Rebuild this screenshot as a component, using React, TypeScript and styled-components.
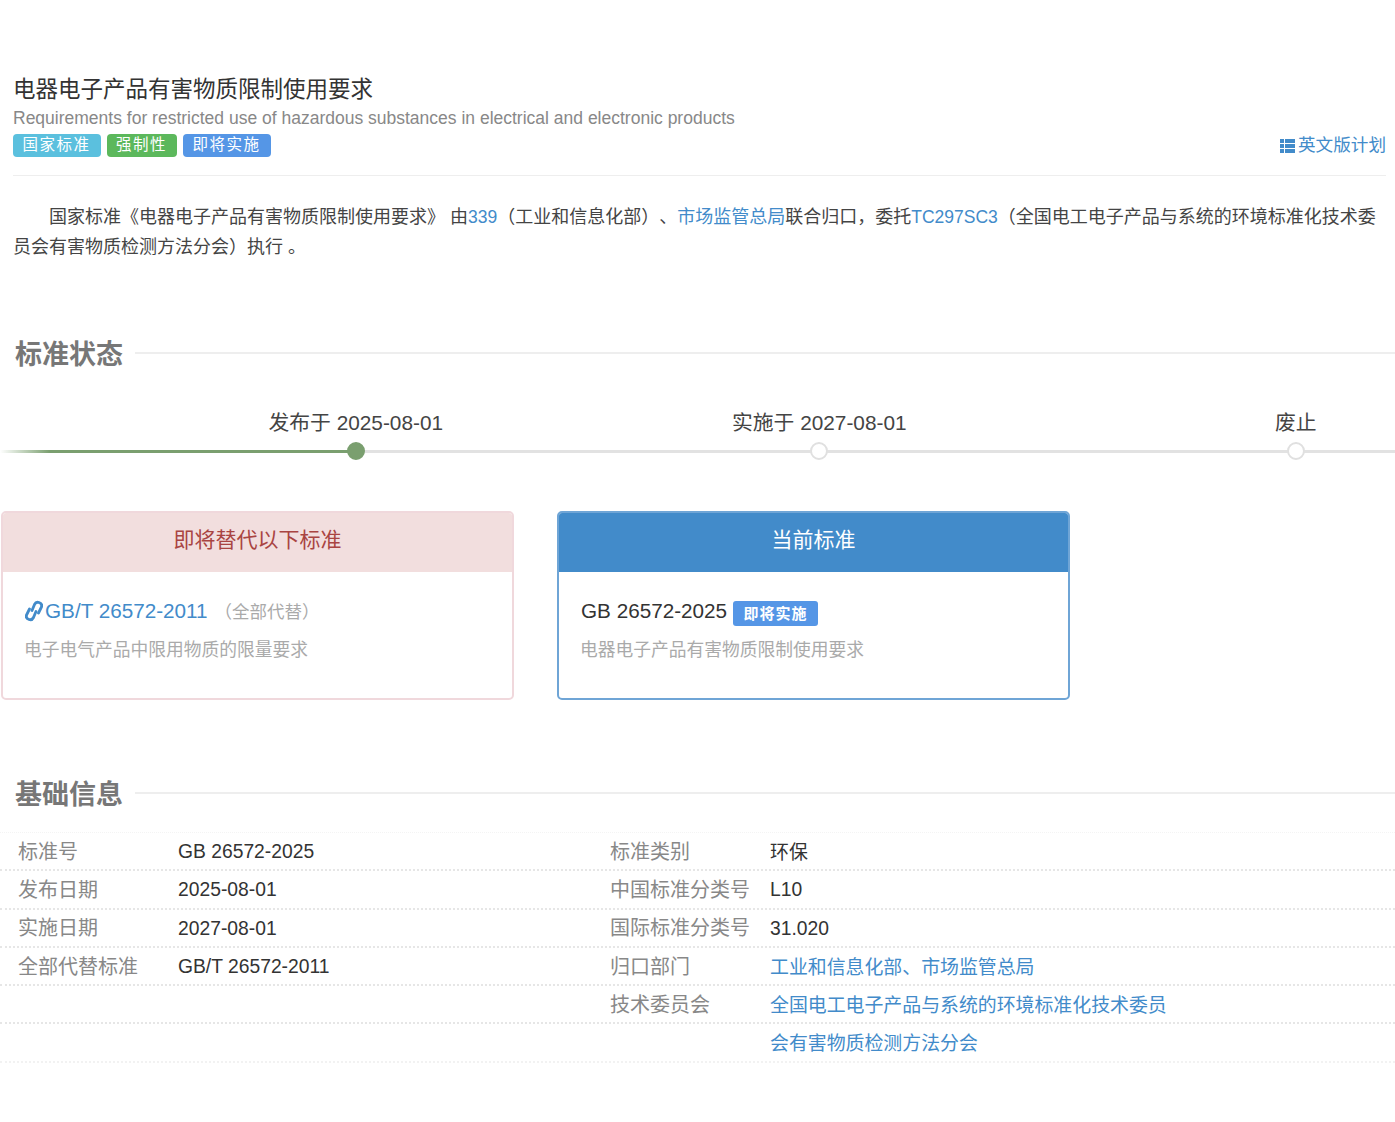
import React from "react";
import styled, { createGlobalStyle } from "styled-components";

const Global = createGlobalStyle`
  html, body { margin: 0; padding: 0; background: #fff; }
  body {
    font-family: "Liberation Sans", "Noto Sans CJK SC", sans-serif;
    color: #333;
    text-spacing-trim: space-all;
  }
  a { color: #428bca; text-decoration: none; }
`;

const Page = styled.div`
  width: 1395px;
  height: 1122px;
  overflow: hidden;
`;

const Header = styled.header`
  margin: 0 9px 0 13px;
  padding: 75px 0 18px;
  border-bottom: 1px solid #eee;
`;

const Title = styled.h1`
  margin: 0;
  font-size: 22.5px;
  line-height: 30px;
  font-weight: 400;
  color: #333;
`;

const Subtitle = styled.div`
  font-size: 17.5px;
  line-height: 26px;
  color: #888;
`;

const TagRow = styled.div`
  display: flex;
  align-items: center;
  margin-top: 3px;
`;

const Tag = styled.span<{ $bg: string }>`
  height: 23px;
  line-height: 21px;
  padding: 0 10px 0 9.5px;
  margin-right: 6px;
  border-radius: 4px;
  background: ${(p) => p.$bg};
  color: #fff;
  font-size: 15.5px;
  letter-spacing: 1.5px;
`;

const PlanLink = styled.a`
  margin-left: auto;
  display: flex;
  align-items: center;
  gap: 3px;
  font-size: 17.6px;
  line-height: 23px;
`;

const Intro = styled.p`
  margin: 0;
  padding: 26px 13px 0;
  font-size: 18px;
  line-height: 30px;
  text-indent: 36px;
  height: 95px;
  color: #444;
`;

const CodeLink = styled.a`
  font-size: 17.5px;
`;

const SectionHead = styled.div<{ $top: number }>`
  display: flex;
  align-items: center;
  gap: 12px;
  margin-top: ${(p) => p.$top}px;
  padding-left: 15px;
  height: 40px;
`;

const SectionTitle = styled.h2`
  margin: 0;
  font-size: 27px;
  line-height: 40px;
  font-weight: 700;
  color: #777;
`;

const SectionRule = styled.div`
  flex: 1;
  height: 2px;
  margin-top: -4px;
  background: #eee;
`;

const Timeline = styled.div`
  position: relative;
  display: flex;
  margin-top: 32px;
  height: 58px;
`;

const Track = styled.div`
  position: absolute;
  left: 0;
  right: 0;
  top: 42.5px;
  height: 3px;
  background: linear-gradient(to right, #fff 0, #e2e2e2 30px);
`;

const Progress = styled.div`
  position: absolute;
  left: 0;
  top: 42.5px;
  width: 356px;
  height: 3px;
  background: linear-gradient(to right, #fff 0, #7a9f6f 50px);
`;

const Step = styled.div<{ $gap: number }>`
  position: relative;
  width: 200px;
  margin-left: ${(p) => p.$gap}px;
  display: flex;
  flex-direction: column;
  align-items: center;
`;

const StepLabel = styled.div`
  font-size: 20.8px;
  line-height: 32px;
  color: #444;
  white-space: nowrap;
`;

const Dot = styled.div<{ $active?: boolean }>`
  box-sizing: border-box;
  width: 18px;
  height: 18px;
  margin-top: 3px;
  border-radius: 50%;
  background: ${(p) => (p.$active ? "#7a9f6f" : "#fff")};
  border: 2px solid ${(p) => (p.$active ? "#7a9f6f" : "#e0e0e0")};
`;

const Cards = styled.div`
  display: flex;
  gap: 43px;
  margin-top: 46px;
  padding-left: 1px;
`;

const Card = styled.div<{ $border: string }>`
  box-sizing: border-box;
  width: 513px;
  height: 189px;
  border: 2px solid ${(p) => p.$border};
  border-radius: 5px;
  overflow: hidden;
`;

const CardHead = styled.div<{ $bg: string; $color: string }>`
  height: 60px;
  margin: -1px -1px 0;
  background: ${(p) => p.$bg};
  color: ${(p) => p.$color};
  font-size: 21px;
  line-height: 56px;
  text-align: center;
`;

const CardBody = styled.div`
  padding: 23px 22px 0;
`;

const CardTitle = styled.div`
  display: flex;
  align-items: center;
  height: 32px;
  font-size: 20.7px;
  white-space: nowrap;
`;

const RefLink = styled.a`
  display: flex;
  align-items: center;
  gap: 2px;
`;

const Note = styled.span`
  margin-left: 7px;
  padding-bottom: 2px;
  font-size: 17.5px;
  color: #aaa;
`;

const Badge = styled.span`
  height: 25px;
  line-height: 25px;
  margin: 4px 0 0 6px;
  padding: 0 10.5px;
  border-radius: 3px;
  background: #5596e6;
  color: #fff;
  font-size: 15px;
  font-weight: 700;
  letter-spacing: 1px;
`;

const CardDesc = styled.div`
  margin: 8px 0 0 -1px;
  font-size: 17.75px;
  line-height: 30px;
  color: #aaa;
`;

const InfoTable = styled.div`
  margin-top: 17px;
  border-top: 1px dotted #f4f4f4;
`;

const InfoRow = styled.div<{ $last?: boolean }>`
  box-sizing: border-box;
  display: grid;
  grid-template-columns: 592px 1fr;
  height: 38.3px;
  border-bottom: 2px dotted ${(p) => (p.$last ? "#f2f2f2" : "#e6e6e6")};
`;

const InfoCell = styled.div`
  display: flex;
  align-items: center;
  padding: 2px 0 0 18px;
  white-space: nowrap;
`;

const InfoLabel = styled.div`
  width: 160px;
  padding-bottom: 4px;
  font-size: 20px;
  color: #888;
`;

const InfoValue = styled.div`
  font-size: 19.3px;
  color: #333;
`;

const CjkValue = styled(InfoValue)`
  padding-bottom: 4px;
  font-size: 18.9px;
`;

const tags = [
  { text: "国家标准", bg: "#5bc0de" },
  { text: "强制性", bg: "#5cb85c" },
  { text: "即将实施", bg: "#5596e6" },
];

const steps = [
  { label: "发布于 2025-08-01", gap: 256.5, active: true },
  { label: "实施于 2027-08-01", gap: 265 },
  { label: "废止", gap: 278 },
];

type Pair = { label?: string; value?: string; link?: boolean; cjk?: boolean };

const rows: [Pair, Pair][] = [
  [{ label: "标准号", value: "GB 26572-2025" }, { label: "标准类别", value: "环保", cjk: true }],
  [{ label: "发布日期", value: "2025-08-01" }, { label: "中国标准分类号", value: "L10" }],
  [{ label: "实施日期", value: "2027-08-01" }, { label: "国际标准分类号", value: "31.020" }],
  [
    { label: "全部代替标准", value: "GB/T 26572-2011" },
    { label: "归口部门", value: "工业和信息化部、市场监管总局", link: true },
  ],
  [{}, { label: "技术委员会", value: "全国电工电子产品与系统的环境标准化技术委员", link: true }],
  [{}, { value: "会有害物质检测方法分会", link: true }],
];

function ListIcon() {
  return (
    <svg width="15" height="14" viewBox="0 0 15 14" fill="currentColor" aria-hidden="true">
      <rect x="0" y="0" width="4" height="4" />
      <rect x="5" y="0" width="10" height="4" />
      <rect x="0" y="5" width="4" height="4" />
      <rect x="5" y="5" width="10" height="4" />
      <rect x="0" y="10" width="4" height="4" />
      <rect x="5" y="10" width="10" height="4" />
    </svg>
  );
}

function ChainIcon() {
  return (
    <svg width="18" height="22" viewBox="0 0 18 22" fill="none" stroke="currentColor" strokeWidth="2.8" strokeLinecap="round" aria-hidden="true">
      <path d="M7 10.5 L9.5 4.5 Q11 1.5 14 2.5 Q17.5 3.8 16.5 7 L13.5 13" />
      <path d="M11 11.5 L8.5 17.5 Q7 20.5 4 19.5 Q0.5 18.2 1.5 15 L4.5 9" />
    </svg>
  );
}

export default function App() {
  return (
    <Page>
      <Global />
      <Header>
        <Title>电器电子产品有害物质限制使用要求</Title>
        <Subtitle>Requirements for restricted use of hazardous substances in electrical and electronic products</Subtitle>
        <TagRow>
          {tags.map((t) => (
            <Tag key={t.text} $bg={t.bg}>{t.text}</Tag>
          ))}
          <PlanLink href="#">
            <ListIcon />
            英文版计划
          </PlanLink>
        </TagRow>
      </Header>
      <Intro>
        国家标准《电器电子产品有害物质限制使用要求》 由<CodeLink href="#">339</CodeLink>（工业和信息化部）、<a href="#">市场监管总局</a>联合归口，委托<CodeLink href="#">TC297SC3</CodeLink>（全国电工电子产品与系统的环境标准化技术委员会有害物质检测方法分会）执行 。
      </Intro>

      <SectionHead $top={38}>
        <SectionTitle>标准状态</SectionTitle>
        <SectionRule />
      </SectionHead>
      <Timeline>
        <Track />
        <Progress />
        {steps.map((s) => (
          <Step key={s.label} $gap={s.gap}>
            <StepLabel>{s.label}</StepLabel>
            <Dot $active={s.active} />
          </Step>
        ))}
      </Timeline>

      <Cards>
        <Card $border="#f0d8dc">
          <CardHead $bg="#f2dede" $color="#a94442">即将替代以下标准</CardHead>
          <CardBody>
            <CardTitle>
              <RefLink href="#">
                <ChainIcon />
                GB/T 26572-2011
              </RefLink>
              <Note>（全部代替）</Note>
            </CardTitle>
            <CardDesc>电子电气产品中限用物质的限量要求</CardDesc>
          </CardBody>
        </Card>
        <Card $border="#6fa5d6">
          <CardHead $bg="#428bca" $color="#fff">当前标准</CardHead>
          <CardBody>
            <CardTitle>
              GB 26572-2025
              <Badge>即将实施</Badge>
            </CardTitle>
            <CardDesc>电器电子产品有害物质限制使用要求</CardDesc>
          </CardBody>
        </Card>
      </Cards>

      <SectionHead $top={75}>
        <SectionTitle>基础信息</SectionTitle>
        <SectionRule />
      </SectionHead>
      <InfoTable>
        {rows.map((r, i) => (
          <InfoRow key={i} $last={i === rows.length - 1}>
            {r.map((c, j) => (
              <InfoCell key={j}>
                <InfoLabel>{c.label}</InfoLabel>
                {c.link ? (
                  <CjkValue><a href="#">{c.value}</a></CjkValue>
                ) : c.cjk ? (
                  <CjkValue>{c.value}</CjkValue>
                ) : (
                  <InfoValue>{c.value}</InfoValue>
                )}
              </InfoCell>
            ))}
          </InfoRow>
        ))}
      </InfoTable>
    </Page>
  );
}
